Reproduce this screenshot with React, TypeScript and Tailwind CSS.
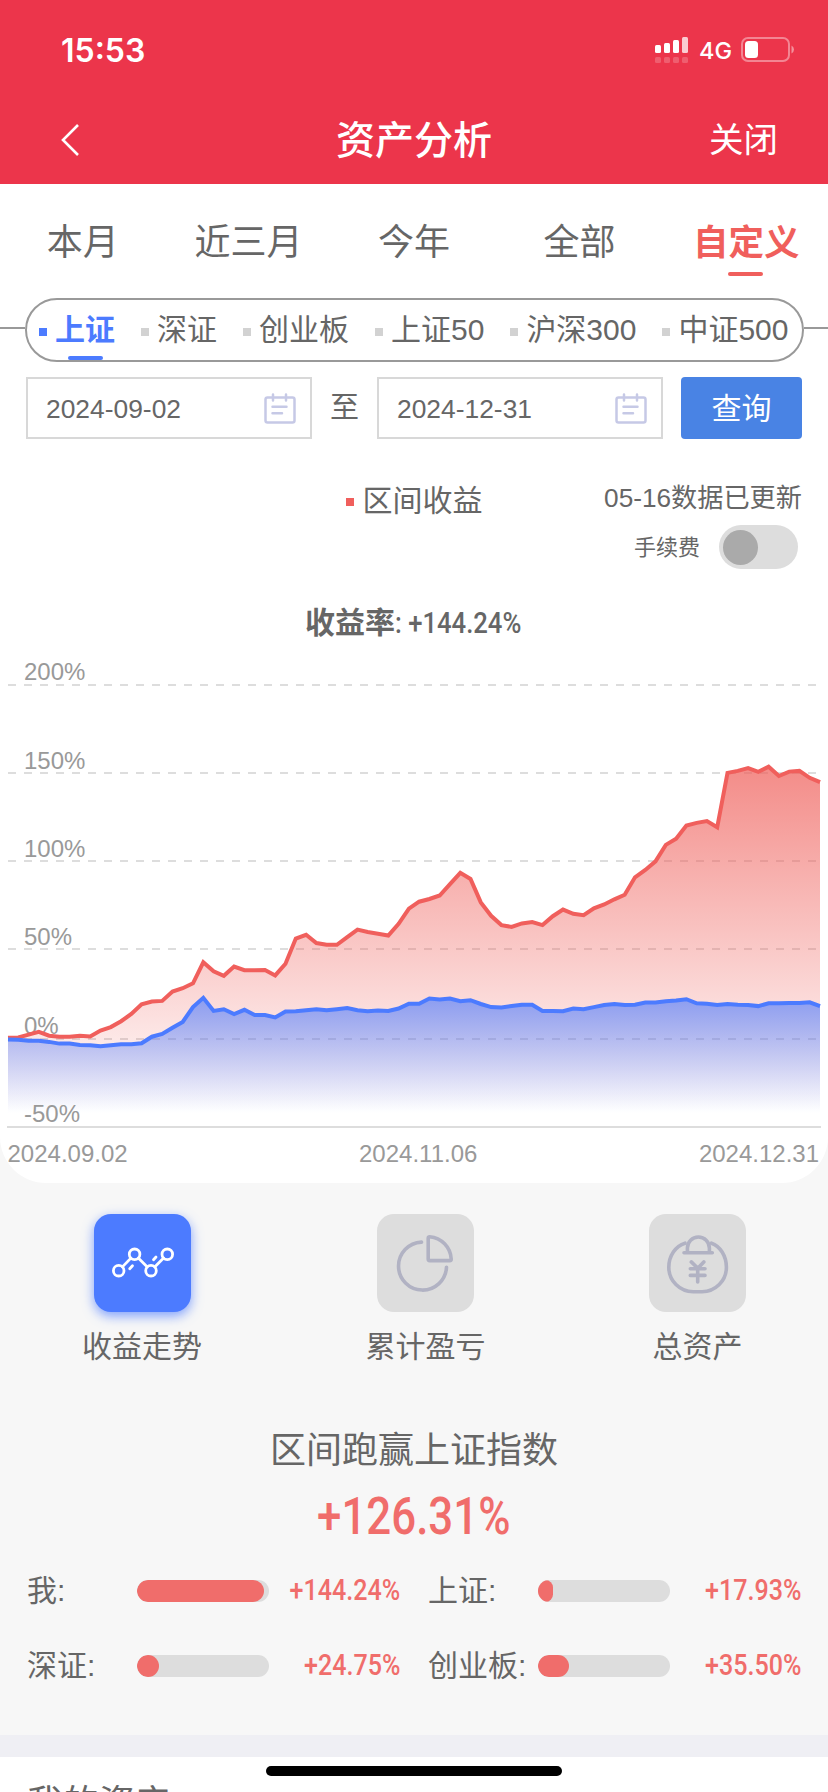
import React from "react";

const STEP = 812 / 79;

const redLine = [
  1126, 1125, 1117, 1109, 1120, 1123, 1123, 1120, 1122, 1105, 1095, 1078, 1057, 1029, 1021, 1019, 992, 982, 968, 907,
  933, 946, 919, 930, 930, 929, 945, 911, 838, 827, 851, 856, 856, 834, 812, 819, 824, 829, 795, 751,
  731, 723, 713, 680, 647, 665, 733, 772, 799, 804, 794, 790, 799, 773, 754, 766, 770, 750, 739, 724,
  711, 660, 639, 614, 566, 548, 510, 502, 497, 515, 357, 351, 343, 354, 339, 366, 353, 351, 371, 384,
];

const blueLine = [
  1131, 1132, 1135, 1135, 1138, 1143, 1143, 1147, 1148, 1151, 1148, 1145, 1145, 1142, 1123, 1115, 1097, 1080, 1037, 1010,
  1048, 1043, 1057, 1045, 1060, 1060, 1067, 1050, 1049, 1046, 1043, 1046, 1043, 1040, 1046, 1049, 1047, 1048, 1041, 1027,
  1027, 1012, 1015, 1012, 1020, 1017, 1028, 1037, 1038, 1034, 1030, 1030, 1048, 1048, 1049, 1041, 1043, 1037, 1031, 1028,
  1031, 1030, 1024, 1024, 1020, 1018, 1014, 1026, 1027, 1031, 1028, 1030, 1031, 1034, 1026, 1026, 1025, 1025, 1023, 1034,
];

const toPoints = (values: number[]) =>
  values.map((v, i) => `${(8 + i * STEP).toFixed(1)},${(v / 2.904).toFixed(1)}`).join(" ");

const gridLines = [35, 123, 211, 299, 389];
const gridLabels = [
  { text: "200%", y: 30 },
  { text: "150%", y: 118.5 },
  { text: "100%", y: 206.5 },
  { text: "50%", y: 295 },
  { text: "0%", y: 383.5 },
];

function StatusBar() {
  return (
    <div className="flex h-[96px] items-center justify-between pl-[61px] pr-[33px] pt-[4px]">
      <span className="pt-[2px] font-['Inter',sans-serif] text-[32px] leading-none font-semibold">15:53</span>
      <div className="flex items-center">
        <svg width="34" height="28" viewBox="0 0 34 28" fill="#fff">
          <rect x="0" y="9" width="6" height="8" rx="1.5" />
          <rect x="9" y="7" width="6" height="10" rx="1.5" />
          <rect x="18" y="4" width="6" height="13" rx="1.5" />
          <rect x="27" y="1" width="6" height="16" rx="1.5" opacity=".75" />
          <g opacity=".2">
            <rect x="0" y="21" width="6" height="6" rx="1.5" />
            <rect x="9" y="21" width="6" height="6" rx="1.5" />
            <rect x="18" y="21" width="6" height="6" rx="1.5" />
            <rect x="27" y="21" width="6" height="6" rx="1.5" />
          </g>
        </svg>
        <span className="ml-[10px] w-[33px] pt-px font-['Inter',sans-serif] text-[23.5px] leading-none font-medium">4G</span>
        <svg className="ml-[9px]" width="54" height="26" viewBox="0 0 54 26">
          <rect x="1" y="1" width="47" height="23" rx="6" fill="none" stroke="#fff" strokeOpacity=".4" strokeWidth="2" />
          <rect x="4" y="4" width="13" height="17" rx="3.5" fill="#fff" />
          <path d="M50.5 8.5Q53 10 53 12.5T50.5 16.5Z" fill="#fff" fillOpacity=".45" />
        </svg>
      </div>
    </div>
  );
}

function NavBar() {
  return (
    <div className="flex h-[88px] items-center">
      <div className="w-[200px] pl-[60px]">
        <svg width="22" height="34" viewBox="0 0 22 34" fill="none" stroke="#fff" strokeWidth="2.6">
          <path d="M18 2L3 17L18 32" />
        </svg>
      </div>
      <h1 className="flex-1 text-center text-[39px] leading-none font-medium">资产分析</h1>
      <div className="w-[200px] pr-[50px] text-right text-[34.5px] leading-none">关闭</div>
    </div>
  );
}

function RangeTabs() {
  const tabs = ["本月", "近三月", "今年", "全部", "自定义"];
  return (
    <div className="grid h-[114px] grid-cols-5 text-[36px]">
      {tabs.map((t, i) => (
        <div
          key={t}
          className={
            i === 4
              ? "flex flex-col items-center pt-[39px] font-bold text-[#f05f5c]"
              : "flex flex-col items-center pt-[39px]"
          }
        >
          <span className={i === 4 ? "pl-[2px] text-[35.5px] leading-[40px]" : "leading-[40px]"}>{t}</span>
          {i === 4 && <span className="mt-[9px] h-1 w-[35px] rounded-full bg-[#f05f5c]" />}
        </div>
      ))}
    </div>
  );
}

function IndexPicker() {
  const items = ["上证", "深证", "创业板", "上证50", "沪深300", "中证500"];
  return (
    <div className="flex items-center">
      <span className="-mt-[4px] h-[2px] w-[25px] bg-[#999]" />
      <div className="flex h-[64px] w-[779px] gap-[26px] rounded-full border-2 border-[#999] pl-[12px]">
        {items.map((t, i) => (
          <div key={t} className="flex h-[60px] shrink-0 items-center gap-2">
            <span className={i === 0 ? "mt-1 size-2 bg-[#4c7bff]" : "mt-1 size-2 bg-[#d2d2d2]"} />
            {i === 0 ? (
              <span className="flex h-[60px] flex-col items-center pt-[10px] font-bold text-[#4c7bff]">
                <span className="text-[30px] leading-[40px]">{t}</span>
                <span className="mt-[6px] h-1 w-[35px] rounded-full bg-[#4c7bff]" />
              </span>
            ) : (
              <span className="text-[30px] leading-[40px]">{t}</span>
            )}
          </div>
        ))}
      </div>
      <span className="-mt-[4px] h-[2px] flex-1 bg-[#999]" />
    </div>
  );
}

function DateField({ value }: { value: string }) {
  return (
    <div className="flex h-[62px] w-[286px] items-center justify-between border-2 border-[#d8d8d8] pr-[14px] pl-[18px]">
      <span className="pt-[2px] text-[26.4px] leading-none">{value}</span>
      <svg width="32" height="32" viewBox="0 0 32 32" fill="none" stroke="#c6c9e6" strokeWidth="2.5" strokeLinecap="round">
        <rect x="1.5" y="5.5" width="29" height="25" rx="2" />
        <path d="M9 2.5V8.5M22 2.5V8.5M8.5 14.8H22.5M8.5 21.3H18" />
      </svg>
    </div>
  );
}

function ReturnChart() {
  const red = toPoints(redLine);
  const blue = toPoints(blueLine);
  return (
    <svg className="block" width="828" height="533" viewBox="0 0 828 533" fontFamily="'Liberation Sans', sans-serif" fontSize="24">
      <defs>
        <linearGradient id="redFill" gradientUnits="userSpaceOnUse" x1="0" y1="117" x2="0" y2="460">
          <stop offset="0" stopColor="#ef5f5a" stopOpacity=".72" />
          <stop offset="1" stopColor="#ef5f5a" stopOpacity="0" />
        </linearGradient>
        <linearGradient id="blueFill" gradientUnits="userSpaceOnUse" x1="0" y1="348" x2="0" y2="463">
          <stop offset="0" stopColor="#4c7bff" stopOpacity=".64" />
          <stop offset="1" stopColor="#4c7bff" stopOpacity="0" />
        </linearGradient>
      </defs>
      <g stroke="#ddd" strokeWidth="2">
        {gridLines.map((y) => (
          <line key={y} x1="8" x2="820" y1={y} y2={y} strokeDasharray="8 8" />
        ))}
        <line x1="7" x2="821" y1="477" y2="477" />
      </g>
      <g fill="#999">
        {gridLabels.map((l) => (
          <text key={l.text} x="24" y={l.y}>
            {l.text}
          </text>
        ))}
      </g>
      <polygon points={`8,476 ${red} 820,476`} fill="url(#redFill)" />
      <polyline points={red} fill="none" stroke="#f05f5c" strokeWidth="4" />
      <polygon points={`8,476 ${blue} 820,476`} fill="url(#blueFill)" />
      <polyline points={blue} fill="none" stroke="#4c7bff" strokeWidth="4" />
      <g fill="#999">
        <text x="24" y="472">-50%</text>
        <text x="7.5" y="512">2024.09.02</text>
        <text x="359" y="512">2024.11.06</text>
        <text x="819" y="512" textAnchor="end">2024.12.31</text>
      </g>
    </svg>
  );
}

function ViewButton({ label, active, children }: { label: string; active?: boolean; children: React.ReactNode }) {
  return (
    <div className="flex flex-col items-center">
      <div
        className={
          active
            ? "h-[98px] w-[97px] rounded-[17px] bg-[#4c7bff] shadow-[0_4px_12px_rgba(76,123,255,0.7)]"
            : "h-[98px] w-[97px] rounded-[17px] bg-[#ddd]"
        }
      >
        <svg
          width="97"
          height="98"
          viewBox="0 0 97 98"
          fill="none"
          stroke={active ? "#fff" : "#b1b2c3"}
          strokeWidth={active ? 2.8 : 3.6}
          strokeLinecap="round"
          strokeLinejoin="round"
        >
          {children}
        </svg>
      </div>
      <span className="mt-[15px] text-[30px] leading-[40px]">{label}</span>
    </div>
  );
}

function Stat({ label, value, width }: { label: string; value: string; width: number }) {
  return (
    <div className="flex h-[40px] items-center">
      <span className="w-[110px] text-[30px] leading-[40px] whitespace-nowrap">{label}</span>
      <div className="h-[22px] w-[132px] overflow-hidden rounded-full bg-[#ddd]">
        <div className="h-full rounded-[11px] bg-[#f06d6b]" style={{ width }} />
      </div>
      <div className="flex flex-1 justify-end">
        <span className="origin-right scale-x-[.85] font-['Roboto',sans-serif] text-[29.5px] leading-none font-medium text-[#f06d6b]">
          {value}
        </span>
      </div>
    </div>
  );
}

export default function App() {
  return (
    <div className="relative flex h-[1792px] w-[828px] flex-col overflow-hidden bg-[#f7f7f7] font-['Liberation_Sans','Noto_Sans_CJK_SC',sans-serif] text-[#666]">
      <header className="h-[184px] shrink-0 bg-[#ec354b] text-white">
        <StatusBar />
        <NavBar />
      </header>

      <section className="h-[999px] shrink-0 overflow-hidden rounded-b-[46px] bg-white">
        <RangeTabs />
        <IndexPicker />

        <div className="mt-[15px] flex items-center pr-[26px] pl-[26px]">
          <DateField value="2024-09-02" />
          <span className="flex-1 text-center text-[29px] leading-none">至</span>
          <DateField value="2024-12-31" />
          <button className="ml-[18px] h-[62px] w-[121px] rounded bg-[#4983e4] pt-px text-[30px] leading-none text-white">查询</button>
        </div>

        <div className="flex h-[211px] flex-col">
          <div className="grid h-[130px] grid-cols-3 pt-[41px]">
            <div />
            <div className="flex h-[42px] items-center justify-center gap-[9px]">
              <span className="mt-[2px] size-2 bg-[#f05f5c]" />
              <span className="text-[30px] leading-[40px]">区间收益</span>
            </div>
            <div className="flex flex-col items-end pr-[26px]">
              <span className="text-[26.2px] leading-[37px] whitespace-nowrap">05-16数据已更新</span>
              <div className="mt-[8px] flex items-center pr-[4px]">
                <span className="pt-px text-[22px] leading-none">手续费</span>
                <span className="ml-[19px] flex h-[44px] w-[79px] items-center rounded-full bg-[#ddd] pl-1">
                  <span className="size-[35px] rounded-full bg-[#aaa]" />
                </span>
              </div>
            </div>
          </div>
          <div className="mt-[34px] flex h-[40px] items-center pl-[305px]">
            <span className="text-[30px] leading-[40px] font-bold">收益率</span>
            <span className="origin-left scale-x-[.87] pt-[2px] font-['Roboto',sans-serif] text-[29.5px] leading-none font-medium whitespace-pre">
              : +144.24%
            </span>
          </div>
        </div>

        <ReturnChart />
      </section>

      <div className="mt-[31px] flex shrink-0 justify-between px-[82px]">
        <ViewButton label="收益走势" active>
          <circle cx="24.7" cy="56.7" r="5.3" />
          <circle cx="40.6" cy="40.3" r="5.3" />
          <circle cx="57" cy="56.7" r="5.3" />
          <circle cx="73.3" cy="40.3" r="5.3" />
          <path d="M28.4 52.9L36.9 44.1M44.3 44.1L53.3 52.9M60.7 52.9L69.6 44.1M35.7 54.8L38.5 51.8M59.5 45.8L62 43" />
        </ViewButton>
        <ViewButton label="累计盈亏">
          <path d="M44.5 28.1A24 24 0 1 0 69.5 53.2" />
          <path d="M51.2 24.2Q51.2 22.7 52.7 22.8A23.5 23.5 0 0 1 74.2 45Q74.3 46.6 72.8 46.6H52.7Q51.2 46.6 51.2 45Z" />
        </ViewButton>
        <ViewButton label="总资产">
          <path d="M36 29.2C26.5 32 19.8 42 19.8 53.3A24.4 24.4 0 0 0 44.2 77.7H53A24.4 24.4 0 0 0 77.4 53.3C77.4 42 71 32 62.5 29.2" />
          <path d="M35 38.7H63.3M38.4 38V34A11 11 0 0 1 60.4 34V38" />
          <path d="M42.3 47.9L48.8 54.2L54.8 47.9M41.3 54.8H56M41.3 61.4H56M48.7 54.5V68" />
        </ViewButton>
      </div>

      <section className="mt-[62px] h-[306px] shrink-0 text-center">
        <h2 className="text-[36px] leading-[44px]">区间跑赢上证指数</h2>
        <div className="mt-[17px] flex justify-center">
          <span className="scale-x-[.835] font-['Roboto',sans-serif] text-[52.5px] leading-[52px] font-medium text-[#f06d6b]">
            +126.31%
          </span>
        </div>
        <div className="mt-[29px] grid grid-cols-[373px_373px] gap-x-[28px] gap-y-[35px] pl-[27px] text-left">
          <Stat label="我:" value="+144.24%" width={127} />
          <Stat label="上证:" value="+17.93%" width={15} />
          <Stat label="深证:" value="+24.75%" width={22} />
          <Stat label="创业板:" value="+35.50%" width={31} />
        </div>
      </section>

      <div className="h-[22px] shrink-0 bg-[#efeff4]" />
      <div className="h-[35px] shrink-0 overflow-hidden bg-white pt-[25px] pl-[27px]">
        <span className="block text-[36px] leading-[44px]">我的资产</span>
      </div>
      <div className="absolute bottom-4 left-[266px] h-[10px] w-[296px] rounded-full bg-black" />
    </div>
  );
}
